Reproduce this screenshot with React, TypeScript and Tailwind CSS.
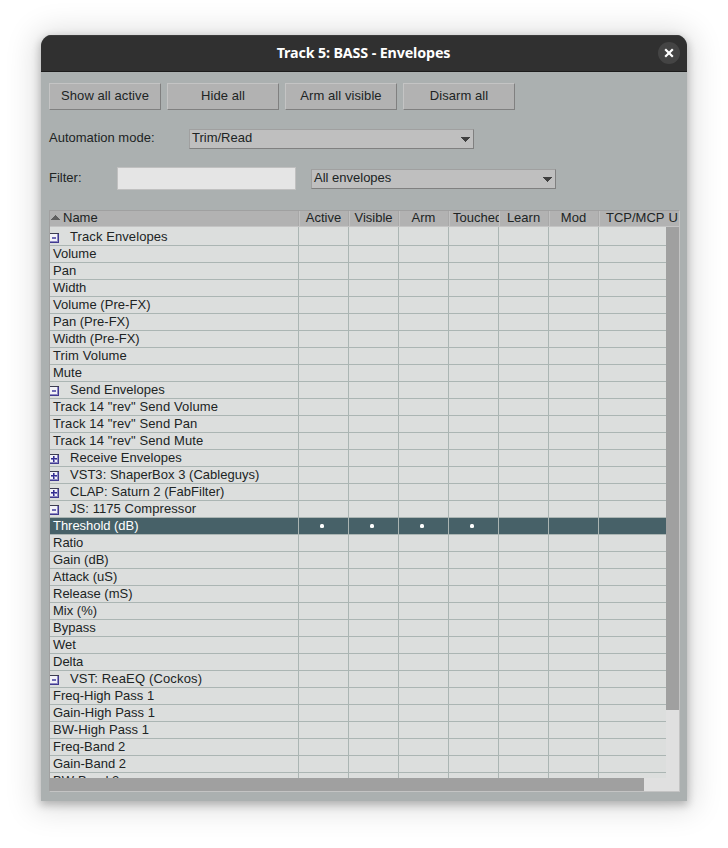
import React from "react";

type Row = { label: string; group?: "open" | "closed"; selected?: boolean; tracking?: string };

const rows: Row[] = [
  { label: "Track Envelopes", group: "open", tracking: "tracking-[0.09px]" },
  { label: "Volume" },
  { label: "Pan" },
  { label: "Width" },
  { label: "Volume (Pre-FX)", tracking: "tracking-[0.05px]" },
  { label: "Pan (Pre-FX)" },
  { label: "Width (Pre-FX)" },
  { label: "Trim Volume", tracking: "tracking-[0.12px]" },
  { label: "Mute" },
  { label: "Send Envelopes", group: "open" },
  { label: 'Track 14 "rev" Send Volume', tracking: "tracking-[0.12px]" },
  { label: 'Track 14 "rev" Send Pan', tracking: "tracking-[0.12px]" },
  { label: 'Track 14 "rev" Send Mute', tracking: "tracking-[0.12px]" },
  { label: "Receive Envelopes", group: "closed", tracking: "tracking-[0.03px]" },
  { label: "VST3: ShaperBox 3 (Cableguys)", group: "closed", tracking: "tracking-[0.03px]" },
  { label: "CLAP: Saturn 2 (FabFilter)", group: "closed", tracking: "tracking-[0.02px]" },
  { label: "JS: 1175 Compressor", group: "open", tracking: "tracking-[0.07px]" },
  { label: "Threshold (dB)", selected: true, tracking: "tracking-[-0.04px]" },
  { label: "Ratio" },
  { label: "Gain (dB)" },
  { label: "Attack (uS)" },
  { label: "Release (mS)" },
  { label: "Mix (%)" },
  { label: "Bypass" },
  { label: "Wet" },
  { label: "Delta" },
  { label: "VST: ReaEQ (Cockos)", group: "open", tracking: "tracking-[0.15px]" },
  { label: "Freq-High Pass 1" },
  { label: "Gain-High Pass 1" },
  { label: "BW-High Pass 1", tracking: "tracking-[0.07px]" },
  { label: "Freq-Band 2" },
  { label: "Gain-Band 2" },
  { label: "BW-Band 2" },
];

const buttons = ["Show all active", "Hide all", "Arm all visible", "Disarm all"];
const columns = ["Active", "Visible", "Arm", "Touched", "Learn", "Mod"];

function Toggle({ open }: { open: boolean }) {
  return (
    <svg width="9" height="10" viewBox="0 0 9 10" shapeRendering="crispEdges" className="shrink-0">
      <rect width="9" height="10" fill="#403a90" />
      <rect width="9" height="1" fill="#3c3c50" />
      <rect y="1" width="8" height="8" fill="#8f8ac4" />
      <rect y="1" width="7" height="7" fill="#f2f2f8" />
      {open ? (
        <rect x="2" y="4" width="4" height="2" fill="#6f6ab4" />
      ) : (
        <>
          <path d="M1 4h6v2H1zM3 2h2v6H3z" fill="#8580c4" />
          <path d="M1 4h6v1H1zM3 2h1v6H3z" fill="#332d90" />
        </>
      )}
    </svg>
  );
}

function Select({ value, className }: { value: string; className: string }) {
  return (
    <div
      className={`flex h-5 justify-between border border-t-[#a0a0a0] border-l-[#a0a0a0] border-r-[#808080] border-b-[#808080] bg-[#bfbfbf] pl-0.5 ${className}`}
    >
      <span className="leading-[15px]">{value}</span>
      <svg width="9" height="5" viewBox="0 0 9 5" shapeRendering="crispEdges" className="mt-[7px] mr-[3px]">
        <path d="M0 0h9v1H8v1H7v1H6v1H5v1H4V4H3V3H2V2H1V1H0z" fill="#404040" />
      </svg>
    </div>
  );
}

export default function App() {
  return (
    <div className="h-[848px] w-[728px] overflow-hidden bg-white pt-[35px] pl-[41px] font-['Liberation_Sans',Arial,sans-serif] text-[13px] text-[#202424]">
      <div className="flex h-[766px] w-[646px] flex-col overflow-hidden rounded-t-[11px] bg-[#abb0b0] shadow-[0_3px_9px_1px_rgba(0,0,0,0.24),0_2px_30px_7px_rgba(0,0,0,0.13)]">
        <div className="flex h-[37px] shrink-0 items-center border-t border-b border-t-[#3b3b3b] border-b-[#1c1c1c] bg-[#303030] pr-[7px]">
          <div className="-mt-0.5 flex-1 pl-[28px] text-center font-['Noto_Sans',sans-serif] text-[14.3px] font-bold tracking-[-0.14px] text-white">
            Track 5: BASS - Envelopes
          </div>
          <div className="-mt-px flex size-[22px] items-center justify-center rounded-full bg-[#444444]">
            <svg width="10" height="10" viewBox="0 0 10 10">
              <path d="M1.2 1.2L8.8 8.8M8.8 1.2L1.2 8.8" stroke="#fff" strokeWidth="2.2" />
            </svg>
          </div>
        </div>

        <div className="flex flex-1 flex-col px-2 pt-[11px]">
          <div className="flex gap-1.5">
            {buttons.map((b) => (
              <div
                key={b}
                className="h-[27px] w-28 border border-t-[#c4c4c4] border-l-[#c4c4c4] border-r-[#808080] border-b-[#808080] bg-[#b2b2b2] text-center leading-[23px] tracking-[0.08px]"
              >
                {b}
              </div>
            ))}
          </div>

          <div className="mt-[19px] flex h-5">
            <span className="w-[140px] leading-[17px]">Automation mode:</span>
            <Select value="Trim/Read" className="w-[285px]" />
          </div>

          <div className="mt-[18px] flex h-[23px]">
            <span className="w-[68px] leading-[21px]">Filter:</span>
            <div className="h-[23px] w-[179px] border border-[#c0c0c0] bg-[#e5e5e5]" />
            <Select value="All envelopes" className="mt-0.5 ml-[15px] w-[245px]" />
          </div>

          <div className="mt-5 flex h-[582px] w-[631px] flex-col border border-t-[#a0a0a0] border-l-[#a0a0a0] border-r-[#c4c4c4] border-b-[#c4c4c4] bg-[#e0e0e0]">
            <div className="flex h-4 shrink-0 overflow-hidden border-b border-[#c4c4c4] bg-[#b2b2b2] leading-[14px]">
              <div className="flex w-[249px] shrink-0 border-r border-[#a8a8a8]">
                <svg width="9" height="5" viewBox="0 0 9 5" shapeRendering="crispEdges" className="mt-1 mr-[3px] ml-[1px]">
                  <path d="M4 0h1v1h1v1h1v1h1v1h1v1H0V4h1V3h1V2h1V1h1z" fill="#606060" />
                </svg>
                Name
              </div>
              {columns.map((c) => (
                <div
                  key={c}
                  className={`w-[50px] shrink-0 overflow-hidden border-l border-l-[#c0c0c0] ${c === "Touched" ? "pl-[3px]" : "border-r border-r-[#a8a8a8] pr-px text-center"}`}
                >
                  {c}
                </div>
              ))}
              <div className="flex flex-1 gap-1 overflow-hidden border-l border-[#c0c0c0] pl-[6px] whitespace-nowrap">
                <span>TCP/MCP</span>
                <span>U</span>
              </div>
            </div>

            <div className="flex h-[551px] shrink-0">
              <div className="w-[616px] overflow-hidden bg-[#dcdedd]">
                {rows.map((r) => (
                  <div
                    key={r.label}
                    className={`flex h-[17px] border-b border-[#abb5b3] leading-4 first:h-[19px] ${r.selected ? "bg-[#476168] text-white" : ""}`}
                  >
                    <div className="flex w-[249px] shrink-0 items-end border-r border-[#abb5b3] whitespace-nowrap">
                      {r.group && (
                        <div className="mb-0.5">
                          <Toggle open={r.group === "open"} />
                        </div>
                      )}
                      <span className={`${r.group ? "ml-[11px]" : "ml-[3px]"} ${r.tracking ?? ""}`}>{r.label}</span>
                    </div>
                    {columns.map((c, i) => (
                      <div key={c} className="flex w-[50px] shrink-0 items-center border-r border-[#abb5b3]">
                        {r.selected && i < 4 && <div className="ml-[21px] size-1 rounded-[1.5px] bg-white" />}
                      </div>
                    ))}
                  </div>
                ))}
              </div>
              <div className="w-[13px]">
                <div className="h-[483px] bg-[#a0a0a0]" />
              </div>
            </div>
            <div className="h-[13px] w-[594px] bg-[#a0a0a0]" />
          </div>
        </div>
      </div>
    </div>
  );
}
